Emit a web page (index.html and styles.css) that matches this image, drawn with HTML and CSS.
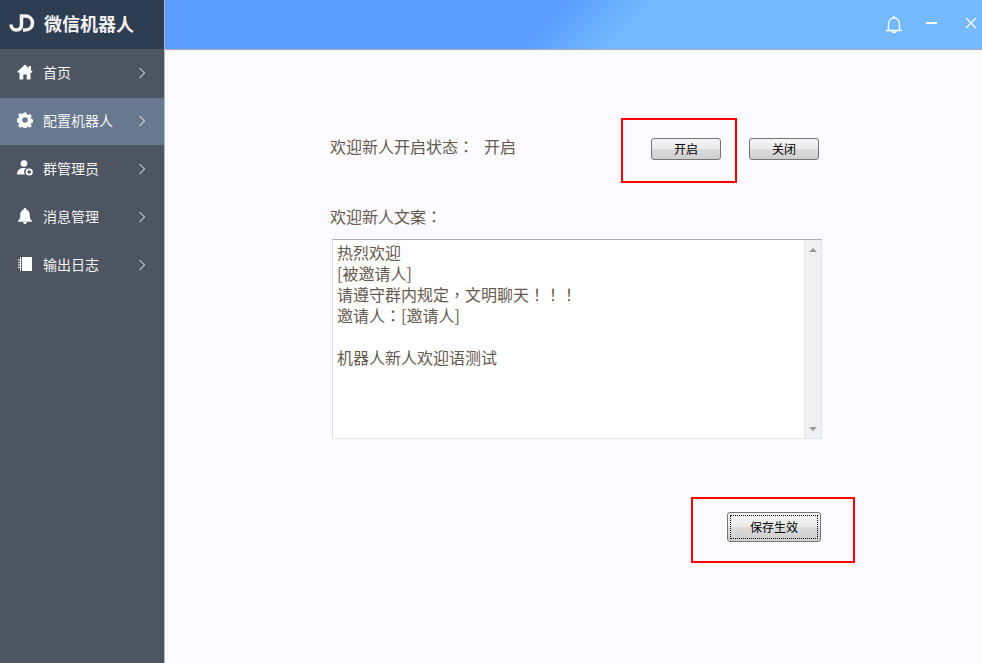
FILE: index.html
```html
<!DOCTYPE html>
<html lang="zh-CN">
<head>
<meta charset="utf-8">
<title>微信机器人</title>
<link rel="stylesheet" href="styles.css">
</head>
<body>
<div class="app">
  <aside class="sidebar">
    <div class="brand">
      <svg class="logo" viewBox="0 0 26 18" role="img" aria-label="JD"><path d="M2 10.500c0 3.500 2.300 5.500 5.300 5.500 3.200 0 5.200-2 5.200-5.500V2h3.500c4.500 0 7.500 2.800 7.500 7s-3 7-7.500 7h-2" fill="none" stroke="#f6f2ee" stroke-width="3.500"/></svg>
      <span class="brand-name">微信机器人</span>
    </div>
    <nav class="menu">
      <a class="item first">
        <svg class="ico" viewBox="0 0 16 16"><path d="M8 0.500 0.300 7.800l1.200 1.200 1-.9V15.500H6.300v-5h3.400v5h3.800V8.100l1 .9 1.200-1.200-1.700-1.600V2h-2.200v2.300z" fill="#fff"/></svg>
        <span class="label">首页</span>
        <svg class="chev" viewBox="0 0 8 12"><path d="M1.500 1 6.500 6l-5 5" fill="none" stroke="#fff" stroke-width="1"/></svg>
      </a>
      <a class="item active">
        <svg class="ico" viewBox="0 0 16 16"><path fill-rule="evenodd" fill="#fff" d="M6.600 0.500h2.800l.4 2 1.300.6 1.800-1.100 2 2-1.100 1.800.6 1.300 2 .4v2.800l-2 .4-.6 1.300 1.100 1.800-2 2-1.800-1.100-1.300.6-.4 2H6.600l-.4-2-1.300-.6-1.800 1.100-2-2 1.100-1.800-.6-1.300-2-.4V6.500l2-.4.600-1.300L1.100 3l2-2 1.800 1.100 1.300-.6zM8 5.200a2.800 2.800 0 1 0 0 5.600 2.800 2.800 0 0 0 0-5.600z"/></svg>
        <span class="label">配置机器人</span>
        <svg class="chev" viewBox="0 0 8 12"><path d="M1.500 1 6.500 6l-5 5" fill="none" stroke="#fff" stroke-width="1"/></svg>
      </a>
      <a class="item">
        <svg class="ico" viewBox="0 0 16 16"><circle cx="7" cy="3.500" r="3.300" fill="#fff"/><path d="M0 14.500c0-4 2.800-6.500 6-6.500h3.500A5 5 0 0 0 7.800 14.500z" fill="#fff"/><circle cx="12.200" cy="12" r="2.700" fill="none" stroke="#fff" stroke-width="1.800"/></svg>
        <span class="label">群管理员</span>
        <svg class="chev" viewBox="0 0 8 12"><path d="M1.500 1 6.500 6l-5 5" fill="none" stroke="#fff" stroke-width="1"/></svg>
      </a>
      <a class="item">
        <svg class="ico" viewBox="0 0 16 17"><path d="M8 0a1.300 1.300 0 0 1 1.300 1.500C11.800 2.200 13 4.400 13 7c0 3.500.6 5.300 2.500 6.800v.7H.5v-.7C2.400 12.300 3 10.500 3 7c0-2.600 1.200-4.800 3.700-5.500A1.300 1.300 0 0 1 8 0zM6 15h4a2 2 0 0 1-4 0z" fill="#fff"/></svg>
        <span class="label">消息管理</span>
        <svg class="chev" viewBox="0 0 8 12"><path d="M1.500 1 6.500 6l-5 5" fill="none" stroke="#fff" stroke-width="1"/></svg>
      </a>
      <a class="item">
        <svg class="ico" viewBox="0 0 16 16"><path d="M5 1h10v14H5zM3 1h1v14H3zM1 3.500h3.500v1H1zM1 6h3.500v1H1zM1 8.500h3.500v1H1zM1 11h3.500v1H1z" fill="#fff"/></svg>
        <span class="label">输出日志</span>
        <svg class="chev" viewBox="0 0 8 12"><path d="M1.500 1 6.500 6l-5 5" fill="none" stroke="#fff" stroke-width="1"/></svg>
      </a>
    </nav>
  </aside>
  <div class="main">
    <header class="topbar">
      <svg class="top-ico bell" viewBox="0 0 18 19"><path d="M1 15.500h16M3.500 15.500V8.500a5.500 5.500 0 0 1 11 0v7M7 15.500a2 2 0 0 0 4 0M9 1v2" fill="none" stroke="#fff" stroke-width="1.300"/></svg>
      <span class="min"></span>
      <svg class="top-ico close" viewBox="0 0 12 12"><path d="M1 1l10 10M11 1 1 11" stroke="#fff" stroke-width="1.200" fill="none"/></svg>
    </header>
    <section class="content">
      <div class="status-row">
        <span class="text status-text">欢迎新人开启状态<span class="punct" lang="zh-TW">：</span></span>
        <span class="text status-text state">开启</span>
        <button class="btn btn-on">开启</button>
        <button class="btn btn-off">关闭</button>
      </div>
      <div class="text caption">欢迎新人文案<span class="punct" lang="zh-TW">：</span></div>
      <div class="textarea">
        <div class="ta-text">
          <div class="ta-line">热烈欢迎</div>
          <div class="ta-line">[被邀请人]</div>
          <div class="ta-line">请遵守群内规定<span class="punct" lang="zh-TW">，</span>文明聊天<span class="punct" lang="zh-TW">！！！</span></div>
          <div class="ta-line">邀请人<span class="punct" lang="zh-TW">：</span>[邀请人]</div>
          <div class="ta-line"></div>
          <div class="ta-line">机器人新人欢迎语测试</div>
        </div>
        <div class="scrollbar"><span class="arrow up"></span><span class="arrow down"></span></div>
      </div>
      <div class="save-row"><button class="btn btn-save"><span class="focus">保存生效</span></button></div>
      <div class="red red-a"></div>
      <div class="red red-b"></div>
    </section>
  </div>
</div>
</body>
</html>
```
FILE: styles.css
```css
* { box-sizing: border-box; }
html, body { margin: 0; height: 100%; }
body { font-family: "Noto Sans CJK SC", "Liberation Sans", sans-serif; overflow: hidden; text-spacing-trim: space-all; }
.punct { font-family: "Noto Sans CJK TC", "Noto Sans CJK SC", sans-serif; }
.app { display: flex; width: 982px; height: 663px; }
.sidebar { width: 165px; flex: none; background: #4c5561; border-right: 1px solid #a9bdd0; color: #fff; }
.brand { height: 49px; background: #2f3d52; display: flex; align-items: center; padding: 0 0 3px 9px; }
.logo { width: 26px; height: 18px; flex: none; margin-right: 9px; }
.brand-name { font-size: 18px; font-weight: 700; line-height: 24px; color: #f2f2f2; }
.menu { display: flex; flex-direction: column; }
.item { height: 48px; display: flex; align-items: center; padding: 0 18px 3px 17px; font-size: 14px; color: #f4f4f4; }
.item.first { height: 49px; }
.item.active { height: 47px; background: #67788f; }
.ico { width: 16px; height: 16px; flex: none; margin-right: 10px; }
.label { flex: 1; line-height: 20px; }
.chev { width: 8px; height: 12px; flex: none; margin-top: 2px; }
.main { flex: 1; display: flex; flex-direction: column; min-width: 0; background: #fbfbff; }
.topbar { height: 50px; flex: none; background: linear-gradient(135deg, #5b9eff 0%, #5b9eff 47%, #75baff 57%, #75baff 100%); border-bottom: 1px solid #a9a9a9; display: flex; align-items: center; justify-content: flex-end; padding: 0 5px 3px 0; }
.top-ico { display: block; }
.bell { width: 18px; height: 19px; margin-top: 3px; }
.min { width: 11px; height: 2px; background: #fff; margin: 0 28px 0 23px; }
.close { width: 12px; height: 12px; }
.content { position: relative; flex: 1; padding: 87px 0 0 165px; }
.text { font-size: 16px; line-height: 22px; color: #655a50; }
.status-row { display: flex; align-items: flex-start; height: 24px; }
.status-text { margin-top: -2px; }
.state { margin-left: 10px; }
.btn { width: 70px; height: 22px; padding: 0; border: 1px solid #757575; border-radius: 3px; background: linear-gradient(#f4f4f4 0%, #ececec 48%, #dcdcdc 50%, #cfcfcf 100%); font: 12px/18px "Noto Sans CJK SC", sans-serif; color: #000; }
.btn-on { margin: 1px 0 0 135px; }
.btn-off { margin: 1px 0 0 28px; }
.caption { margin-top: 44px; }
.textarea { display: flex; width: 490px; height: 200px; margin: 12px 0 0 2px; background: #fff; border: 1px solid #e1e6ec; border-top-color: #aeaeae; border-left-color: #dcdcdc; }
.ta-text { flex: 1; padding: 2px 0 0 4px; font-size: 16px; color: #655a50; }
.ta-line { height: 21px; line-height: 21px; white-space: nowrap; }
.scrollbar { width: 17px; flex: none; background: #f0f0f0; border-left: 1px solid #e6e6e6; display: flex; flex-direction: column; justify-content: space-between; align-items: center; padding: 8px 0 7px; }
.arrow { width: 0; height: 0; border-left: 4px solid transparent; border-right: 4px solid transparent; }
.arrow.up { border-bottom: 4px solid #9a9a9a; }
.arrow.down { border-top: 4px solid #9a9a9a; }
.save-row { margin: 73px 0 0 397px; }
.btn-save { display: block; width: 94px; height: 30px; padding: 2px; }
.focus { display: block; height: 100%; border: 1px dotted #000; line-height: 22px; }
.red { position: absolute; border: 2px solid #f00; pointer-events: none; }
.red-a { left: 456px; top: 68px; width: 116px; height: 65px; }
.red-b { left: 526px; top: 447px; width: 164px; height: 66px; }
```
